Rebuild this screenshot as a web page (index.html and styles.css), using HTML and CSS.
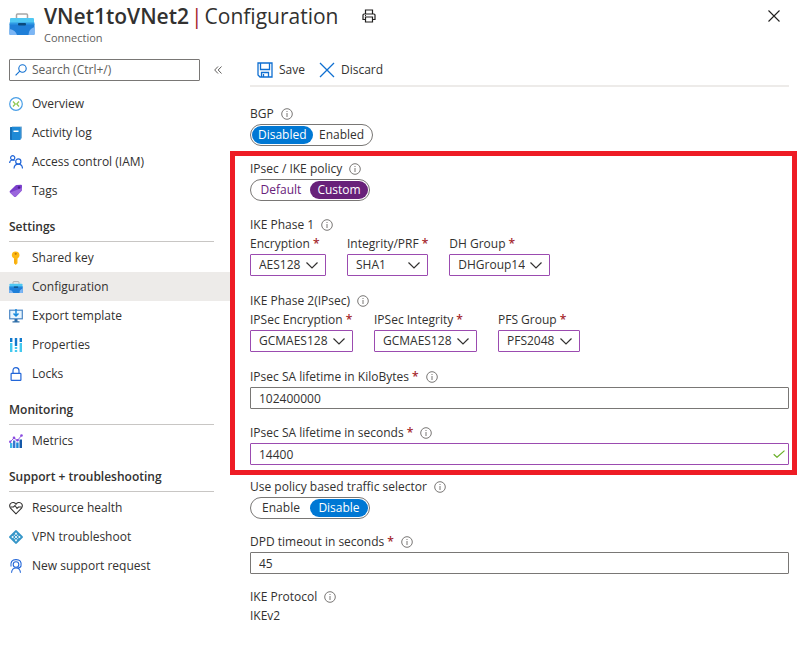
FILE: index.html
```html
<!DOCTYPE html>
<html lang="en">
<head>
<meta charset="utf-8">
<meta name="viewport" content="width=device-width, initial-scale=1">
<title>VNet1toVNet2 | Configuration</title>
<link rel="stylesheet" href="styles.css">
</head>
<body>
<svg class="defs" aria-hidden="true">
  <defs>
    <symbol id="info" viewBox="0 0 12 12"><circle cx="6" cy="6" r="5.300" fill="none" stroke="#797775"/><path d="M6 5v4M6 3v1" stroke="#797775"/></symbol>
    <symbol id="chevron" viewBox="0 0 14 14"><path d="M1.500 4.500L7 10l5.500-5.500" fill="none" stroke="#323130" stroke-width="1.200"/></symbol>
    <symbol id="toolbox" viewBox="0 0 26 24">
      <path d="M7.500 6V3q0-1 1-1h9q1 0 1 1v3" fill="none" stroke="#a6a6a6" stroke-width="1.500"/>
      <path d="M2 6h22q1 0 1 1v5H1V7q0-1 1-1z" fill="#50c8f3"/>
      <path d="M.5 12h25v10q0 1-1 1h-23q-1 0-1-1z" fill="#1f7fd8"/>
      <path d="M.5 17q6 1 7.500 6H1.500q-1 0-1-1zM25.500 15q-6 2-6 8h5q1 0 1-1z" fill="#7cb6f5"/>
      <path d="M.5 10.500h25v2H.5z" fill="#2f9be4"/>
      <rect x="9" y="11" width="8" height="2.500" rx="1" fill="#0a4a7c"/>
    </symbol>
  </defs>
</svg>

<header class="header">
  <svg class="header-icon" aria-hidden="true"><use href="#toolbox"/></svg>
  <div class="header-text">
    <div class="title-row">
      <h1 class="title"><strong>VNet1toVNet2</strong><span class="bar">|</span><span>Configuration</span></h1>
      <button class="icon-button" type="button" aria-label="Print">
        <svg width="14" height="14" viewBox="0 0 14 14" fill="none" stroke="#201f1e" stroke-width="1.200"><path d="M3.500 5V1h7v4M3.500 10.500h-2.500V6q0-1 1-1h10q1 0 1 1v4.500h-2.500"/><path d="M3.500 8h7v5h-7zM3 6.500h1"/></svg>
      </button>
    </div>
    <div class="subtitle">Connection</div>
  </div>
  <button class="icon-button close" type="button" aria-label="Close">
    <svg width="12" height="12" viewBox="0 0 12 12"><path d="M.5.5l11 11M11.500.5l-11 11" stroke="#201f1e" stroke-width="1.100"/></svg>
  </button>
</header>

<div class="body">
  <nav class="sidebar">
    <div class="search-row">
      <div class="search">
        <svg width="12" height="12" viewBox="0 0 12 12" fill="none" stroke="#0f6fd1" stroke-width="1.100" aria-hidden="true"><circle cx="7.500" cy="4.500" r="3.700"/><path d="M4.800 7.200L.6 11.400"/></svg>
        <input type="search" aria-label="Search menu" placeholder="Search (Ctrl+/)">
      </div>
      <button class="icon-button collapse" type="button" aria-label="Collapse menu">
        <svg width="8" height="8" viewBox="0 0 8 8" fill="none" stroke="#605e5c"><path d="M4 .5L.7 4 4 7.500M7.500.5L4.200 4l3.300 3.500"/></svg>
      </button>
    </div>

    <ul class="menu">
      <li><a class="item" href="#"><svg viewBox="0 0 14 14"><circle cx="7" cy="7" r="6.300" fill="#fff" stroke="#4a9fe6" stroke-width="1.200"/><path d="M4 4.500L6.300 7 4 9.500M10 4.500L7.700 7 10 9.500" fill="none" stroke="#8cc751" stroke-width="1.200"/></svg>Overview</a></li>
      <li><a class="item" href="#"><svg viewBox="0 0 14 14"><path d="M3 .5h9.500q.5 0 .5.500v11q0 .5-.5.500H3z" fill="#7fb0d6"/><rect x="1" y="1" width="10.800" height="13" rx="1" fill="#1f8ad6"/><path d="M1 2q0-1 1-1h1v13H2q-1 0-1-1z" fill="#1670b8"/><path d="M4.500 4.500h5v1.500h-5z" fill="#fff"/></svg>Activity log</a></li>
      <li><a class="item" href="#"><svg viewBox="0 0 14 14" fill="none" stroke="#2266d8" stroke-width="1.200"><circle cx="3.700" cy="2.800" r="2.100"/><path d="M.6 8q.2-3 3-3 1.300 0 2 .6"/><circle cx="9.300" cy="6.500" r="2.600"/><path d="M5 13.500q.3-4.300 4.300-4.300t4.200 4.300"/></svg>Access control (IAM)</a></li>
      <li><a class="item" href="#"><svg viewBox="0 0 14 14"><path d="M7.500 1L12 .8q1 0 1 1L12.800 6q0 .5-.4 1L6.800 12.700q-.8.700-1.500 0L.9 8.400q-.6-.7 0-1.400L6.500 1.400q.4-.4 1-.4z" fill="#7a3ecb"/><path d="M.9 8.400L13 4l-.2 2q0 .5-.4 1L6.800 12.700q-.8.700-1.500 0z" fill="#9a66dc"/><circle cx="10" cy="3.500" r="1.200" fill="#4a1c8c"/></svg>Tags</a></li>
    </ul>

    <h2 class="group">Settings</h2>
    <ul class="menu">
      <li><a class="item" href="#"><svg viewBox="0 0 14 14"><path d="M6.500.5q4 0 4 3.800 0 2.400-2 3.200v4.800L6.700 14 5 12.300V7.500Q2.800 6.700 2.800 4.300 2.800.5 6.500.5z" fill="#fdb913"/><circle cx="6.700" cy="2.800" r="1.100" fill="#c77a05"/><path d="M6 8v4.500" stroke="#f0a010"/></svg>Shared key</a></li>
      <li><a class="item current" href="#" aria-current="page"><svg><use href="#toolbox"/></svg>Configuration</a></li>
      <li><a class="item" href="#"><svg viewBox="0 0 14 14"><rect x=".7" y="1.200" width="12.600" height="8.600" fill="#e9f5fd" stroke="#4a86c5" stroke-width="1.200"/><path d="M7 0v6M4.500 4.500L7 7l2.500-2.500" fill="none" stroke="#1689dd" stroke-width="1.500"/><path d="M5.500 10h3v2.200h2V13.500h-7v-1.300h2z" fill="#2d6da8"/></svg>Export template</a></li>
      <li><a class="item" href="#"><svg viewBox="0 0 14 14"><path d="M1 0h2.400v4H1zM5.800 0h2.400v8H5.800zM10.600 0H13v4h-2.400z" fill="#1279cc"/><path d="M1 5h2.400v9H1zM5.800 9h2.400v2H5.800zM5.800 12h2.400v2H5.800zM10.600 5H13v9h-2.400z" fill="#43c9ef"/></svg>Properties</a></li>
      <li><a class="item" href="#"><svg viewBox="0 0 14 14" fill="none" stroke="#2266d8" stroke-width="1.200"><rect x="2.100" y="6.300" width="9.800" height="7" rx=".6"/><path d="M4 6V3.700q0-3.100 3-3.100t3 3.100V6"/></svg>Locks</a></li>
    </ul>

    <h2 class="group">Monitoring</h2>
    <ul class="menu">
      <li><a class="item" href="#"><svg viewBox="0 0 14 14"><path d="M1 9h2.400v5H1z" fill="#3fb7e8"/><path d="M4 6.500h2.400V14H4z" fill="#3a74cf"/><path d="M7.200 8.500h2.400V14H7.200z" fill="#1c8ad8"/><path d="M10.500 5.500H13V14h-2.500z" fill="#1559a8"/><path d="M1 8l4-4 3.500 2.500L12.500 1.500" fill="none" stroke="#9a63e6"/><g fill="#8a4be0"><circle cx="1.200" cy="7.700" r="1.200"/><circle cx="5" cy="3.900" r="1.300"/><circle cx="8.500" cy="6.300" r="1.200"/><circle cx="12.500" cy="1.500" r="1.300"/></g></svg>Metrics</a></li>
    </ul>

    <h2 class="group">Support + troubleshooting</h2>
    <ul class="menu">
      <li><a class="item" href="#"><svg viewBox="0 0 14 14" fill="none" stroke="#323130" stroke-width="1.100"><path d="M7 12.800L1.500 7.200Q0 5 1.200 3 2.500 1.200 4.500 1.500 6 1.700 7 3.200 8 1.700 9.500 1.500q2-.3 3.300 1.500 1.200 2-.3 4.200z"/><path d="M1.500 6h3L6 4.500l2 3L9.500 6h3"/></svg>Resource health</a></li>
      <li><a class="item" href="#"><svg viewBox="0 0 14 14"><path d="M6.200.4q.8-.8 1.600 0l5.800 5.800q.8.800 0 1.600l-5.800 5.800q-.8.800-1.600 0L.4 7.800q-.8-.8 0-1.600z" fill="#3596c8"/><path d="M7 2.200l1.500 2.200h-3zM7 11.800l1.500-2.200h-3zM2.200 7l2.200-1.500v3zM11.800 7L9.600 5.500v3z" fill="#fff"/><path d="M5.200 5.200l3.600 3.600M8.800 5.200L5.200 8.800" stroke="#d4ecf8"/></svg>VPN troubleshoot</a></li>
      <li><a class="item" href="#"><svg viewBox="0 0 14 14" fill="none" stroke="#2266d8" stroke-width="1.100"><circle cx="7" cy="5.500" r="2.800"/><path d="M2 7.500Q1 .6 7 .6t5 6.400q-.5 2-4 2.200M2.500 13.700q.5-4.700 4.500-4.700t4.500 4.700"/></svg>New support request</a></li>
    </ul>
  </nav>

  <main class="main">
    <div class="toolbar">
      <button class="command" type="button"><svg width="16" height="16" viewBox="0 0 16 16" fill="none" stroke="#0f6fd1" stroke-width="1.300"><path d="M1 1h14v14H3l-2-2z"/><path d="M3.500 1v6.500h9V1M4.500 15v-4.500h7V15M6.500 12v3"/></svg>Save</button>
      <button class="command" type="button"><svg width="16" height="16" viewBox="0 0 16 16"><path d="M1 1l14 14M15 1L1 15" stroke="#0f6fd1" stroke-width="1.300"/></svg>Discard</button>
    </div>

    <form class="form">
      <fieldset class="field">
        <legend class="label">BGP <svg class="info"><use href="#info"/></svg></legend>
        <div class="toggle">
          <label><input type="radio" name="bgp" checked><span>Disabled</span></label>
          <label><input type="radio" name="bgp"><span>Enabled</span></label>
        </div>
      </fieldset>

      <section class="highlight">
        <fieldset class="field">
          <legend class="label">IPsec / IKE policy <svg class="info"><use href="#info"/></svg></legend>
          <div class="toggle edited">
            <label><input type="radio" name="policy"><span>Default</span></label>
            <label><input type="radio" name="policy" checked><span>Custom</span></label>
          </div>
        </fieldset>

        <fieldset class="phase">
          <legend class="label heading">IKE Phase 1 <svg class="info"><use href="#info"/></svg></legend>
          <div class="columns">
            <div class="field">
              <label class="label" for="enc1">Encryption <span class="req">*</span></label>
              <div class="select"><select id="enc1"><option>AES128</option></select><svg><use href="#chevron"/></svg></div>
            </div>
            <div class="field">
              <label class="label" for="int1">Integrity/PRF <span class="req">*</span></label>
              <div class="select"><select id="int1"><option>SHA1</option></select><svg><use href="#chevron"/></svg></div>
            </div>
            <div class="field">
              <label class="label" for="dh">DH Group <span class="req">*</span></label>
              <div class="select"><select id="dh"><option>DHGroup14</option></select><svg><use href="#chevron"/></svg></div>
            </div>
          </div>
        </fieldset>

        <fieldset class="phase">
          <legend class="label heading">IKE Phase 2(IPsec) <svg class="info"><use href="#info"/></svg></legend>
          <div class="columns">
            <div class="field">
              <label class="label" for="enc2">IPSec Encryption <span class="req">*</span></label>
              <div class="select"><select id="enc2"><option>GCMAES128</option></select><svg><use href="#chevron"/></svg></div>
            </div>
            <div class="field">
              <label class="label" for="int2">IPSec Integrity <span class="req">*</span></label>
              <div class="select"><select id="int2"><option>GCMAES128</option></select><svg><use href="#chevron"/></svg></div>
            </div>
            <div class="field">
              <label class="label" for="pfs">PFS Group <span class="req">*</span></label>
              <div class="select"><select id="pfs"><option>PFS2048</option></select><svg><use href="#chevron"/></svg></div>
            </div>
          </div>
        </fieldset>

        <div class="field">
          <label class="label" for="kb">IPsec SA lifetime in KiloBytes <span class="req">*</span> <svg class="info"><use href="#info"/></svg></label>
          <input class="text" id="kb" type="text" value="102400000">
        </div>
        <div class="field">
          <label class="label" for="sec">IPsec SA lifetime in seconds <span class="req">*</span> <svg class="info"><use href="#info"/></svg></label>
          <div class="validated">
            <input class="text edited" id="sec" type="text" value="14400">
            <svg viewBox="0 0 12 8" aria-hidden="true"><path d="M.7 4.300L4 7.300 11.500.6" fill="none" stroke="#6bb02a" stroke-width="1.200"/></svg>
          </div>
        </div>
      </section>

      <fieldset class="field">
        <legend class="label">Use policy based traffic selector <svg class="info"><use href="#info"/></svg></legend>
        <div class="toggle">
          <label><input type="radio" name="selector"><span>Enable</span></label>
          <label><input type="radio" name="selector" checked><span>Disable</span></label>
        </div>
      </fieldset>
      <div class="field spaced">
        <label class="label" for="dpd">DPD timeout in seconds <span class="req">*</span> <svg class="info"><use href="#info"/></svg></label>
        <input class="text" id="dpd" type="text" value="45">
      </div>
      <div class="field spaced">
        <div class="label">IKE Protocol <svg class="info"><use href="#info"/></svg></div>
        <div class="value">IKEv2</div>
      </div>
    </form>
  </main>
</div>
</body>
</html>
```

FILE: styles.css
```css
* { box-sizing: border-box; }

body {
  margin: 0;
  background: #fff;
  color: #323130;
  font: 12px/18px "Open Sans", "Noto Sans", sans-serif;
}

button, input, select { font: inherit; color: inherit; }
fieldset { margin: 0; padding: 0; border: 0; min-width: 0; }
legend { padding: 0; }
svg { display: block; flex: none; }
.defs { position: absolute; width: 0; height: 0; }

.icon-button {
  display: flex;
  padding: 0;
  border: 0;
  background: none;
}

/* Header */
.header {
  display: flex;
  align-items: flex-start;
  gap: 9px;
  height: 52px;
  padding: 2px 20px 0 9px;
}
.header-icon { width: 26px; height: 24px; margin-top: 10px; }
.header-text { flex: 1; }
.title-row { display: flex; align-items: center; gap: 23px; }
.title {
  display: flex;
  gap: 2px;
  margin: 0;
  font-size: 21px;
  line-height: 28px;
  font-weight: 400;
  white-space: nowrap;
}
.title strong { font-weight: 600; }
.bar { color: #a4262c; }
.subtitle { font-size: 11px; line-height: 16px; color: #605e5c; }
.close { margin-top: 8px; }

/* Sidebar */
.body { display: flex; align-items: flex-start; }
.sidebar { flex: none; width: 230px; }
.search-row {
  display: flex;
  align-items: center;
  gap: 14px;
  padding: 7px 8px 8px 9px;
}
.search {
  display: flex;
  align-items: center;
  gap: 5px;
  width: 191px;
  height: 22px;
  padding: 0 5px;
  border: 1px solid #797775;
  border-radius: 1px;
}
.search input {
  flex: 1;
  min-width: 0;
  padding: 0;
  border: 0;
  outline: 0;
  background: none;
  appearance: none;
}
.search input::placeholder { color: #605e5c; opacity: 1; }

.menu { margin: 0; padding: 0; list-style: none; }
.item {
  display: flex;
  align-items: center;
  gap: 9px;
  height: 29px;
  padding-left: 9px;
  color: inherit;
  text-decoration: none;
}
.item svg { width: 14px; height: 14px; }
.item.current { background: #edebe9; }
.group {
  height: 37px;
  margin: 0 16px 1px 9px;
  padding-top: 13px;
  border-bottom: 1px solid #c8c6c4;
  font-size: 12px;
  line-height: 18px;
  font-weight: 600;
}

/* Main column */
.main { flex: 1; min-width: 0; padding: 0 11px 0 20px; }
.toolbar {
  display: flex;
  gap: 14px;
  height: 35px;
  padding: 0 7px;
  border-bottom: 2px solid #edebe9;
}
.command {
  display: flex;
  align-items: center;
  gap: 6px;
  height: 36px;
  padding: 0;
  border: 0;
  background: none;
}

.form { padding-top: 17px; }
.label {
  display: flex;
  align-items: center;
  gap: 3px;
  height: 20px;
  font-weight: 500;
  white-space: nowrap;
}
.info { width: 12px; height: 12px; margin-left: 4px; }
.req { color: #a4262c; font-weight: 600; }
.spaced { margin-top: 13px; }

.highlight {
  display: flex;
  flex-direction: column;
  gap: 14px;
  margin: 5px -8px 2px -20px;
  padding: 3px 3px 5px 15px;
  border: 5px solid #ee1c25;
}
.phase { margin-bottom: 1px; }
.heading { height: 19px; }
.columns { display: flex; gap: 21px; }

.toggle {
  display: inline-flex;
  height: 22px;
  padding: 1px;
  border: 1px solid #797775;
  border-radius: 11px;
  vertical-align: top;
}
.toggle label { position: relative; display: flex; }
.toggle input {
  position: absolute;
  inset: 0;
  margin: 0;
  opacity: 0;
}
.toggle span {
  min-width: 58px;
  padding: 0 6px;
  border-radius: 9px;
  line-height: 18px;
  text-align: center;
}
.toggle :checked + span { background: #0078d4; color: #fff; font-weight: 500; }
.toggle.edited { color: #68217a; }
.toggle.edited :checked + span { background: #68217a; }

.select { position: relative; }
.select select {
  display: block;
  width: 100%;
  height: 22px;
  padding: 0 24px 0 8px;
  border: 1px solid #9b4bb0;
  border-radius: 1px;
  background: #fff;
  appearance: none;
}
.select svg {
  position: absolute;
  top: 4px;
  right: 7px;
  width: 14px;
  height: 14px;
  pointer-events: none;
}

.text {
  display: block;
  width: 100%;
  height: 22px;
  padding: 0 8px;
  border: 1px solid #797775;
  border-radius: 1px;
  background: #fff;
}
.text.edited { border-color: #9b4bb0; }
.validated { position: relative; }
.validated svg {
  position: absolute;
  top: 7px;
  right: 4px;
  width: 12px;
  height: 8px;
}
```
